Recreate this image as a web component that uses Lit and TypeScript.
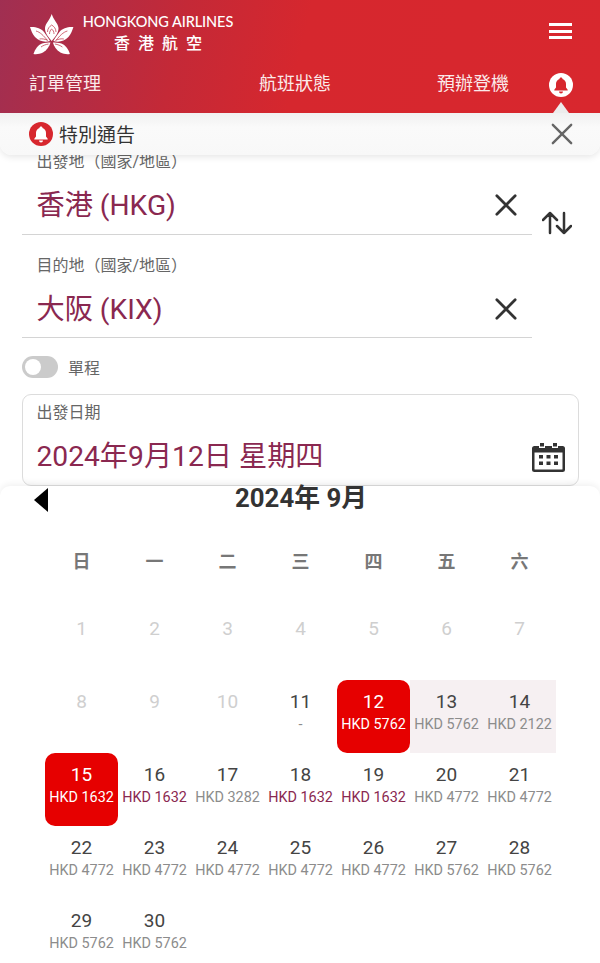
import { LitElement, html, css, svg } from 'lit';
import { customElement } from 'lit/decorators.js';
import { classMap } from 'lit/directives/class-map.js';

type Day = { d: number; price?: string; off?: boolean; sel?: boolean; range?: boolean; low?: boolean };

const WEEK = ['日', '一', '二', '三', '四', '五', '六'];

const DAYS: Day[] = [
  ...[1, 2, 3, 4, 5, 6, 7, 8, 9, 10].map((d) => ({ d, off: true })),
  { d: 11, price: '-' },
  { d: 12, price: 'HKD 5762', sel: true },
  { d: 13, price: 'HKD 5762', range: true },
  { d: 14, price: 'HKD 2122', range: true },
  { d: 15, price: 'HKD 1632', sel: true },
  { d: 16, price: 'HKD 1632', low: true },
  { d: 17, price: 'HKD 3282' },
  { d: 18, price: 'HKD 1632', low: true },
  { d: 19, price: 'HKD 1632', low: true },
  { d: 20, price: 'HKD 4772' },
  { d: 21, price: 'HKD 4772' },
  ...[22, 23, 24, 25, 26].map((d) => ({ d, price: 'HKD 4772' })),
  ...[27, 28, 29, 30].map((d) => ({ d, price: 'HKD 5762' })),
];

// left half of the bauhinia, mirrored for the right side
const sidePetals = svg`
  <path fill="#fff" d="M0 13C5 12.500 11 14 14 18C16 21 18.500 24 20 27C15 28.500 9 27.500 5 23C2.500 20 1 16.500 0 13Z"/>
  <path fill="#fff" d="M3.500 40C5 35 8 31 12 29.500C15 28.500 18 28.500 20.500 28.500C19.500 32 17 36 13 38.500C10 40 6.500 40.500 3.500 40Z"/>
  <path fill="none" stroke="#bb2a3e" stroke-width=".7" d="M6 17C10 18 14 22 17 26M9.500 25C12 24.500 15 25 18 26.500M11 33C13 31.500 15.500 30.500 18.500 30"/>`;

const bell = svg`<path d="M12 4.500c-.9 0-1.500.6-1.500 1.400C8.300 6.600 7 8.500 7 11v3.500L5.300 16.800v.7h13.400v-.7L17 14.500V11c0-2.500-1.300-4.400-3.500-5.100 0-.8-.6-1.400-1.500-1.400zM10 18.500a2 2 0 0 0 4 0z"/>`;

@customElement('app-root')
export class AppRoot extends LitElement {
  static styles = css`
    :host {
      display: block;
      width: 600px;
      height: 963px;
      overflow: hidden;
      background: #fff;
      font-family: Roboto, 'Noto Sans CJK TC', sans-serif;
      color: #333;
    }
    .top {
      height: 113px;
      box-sizing: border-box;
      background: linear-gradient(103deg, #a02f52 0%, #c42937 30%, #d6272e 50%, #d8272e 100%);
      color: #fff;
      position: relative;
      z-index: 3;
    }
    .brand {
      display: flex;
      height: 70px;
      padding: 14px 28px 0 30px;
      box-sizing: border-box;
    }
    .flower {
      width: 44px;
      height: 41px;
    }
    .logo-text {
      margin-left: 8px;
      width: 152px;
      text-align: center;
    }
    .logo-en {
      font-family: Lato, sans-serif;
      font-size: 14.500px;
      font-weight: 500;
      line-height: 16px;
      white-space: nowrap;
      letter-spacing: -0.100px;
    }
    .logo-zh {
      font-size: 16px;
      font-weight: 500;
      line-height: 22px;
      letter-spacing: 8px;
      margin-top: 3px;
      padding-left: 8px;
    }
    .burger {
      margin-left: auto;
      margin-top: 9px;
      width: 23px;
      height: 16px;
      border-top: 3px solid #fff;
      border-bottom: 3px solid #fff;
      box-sizing: border-box;
      position: relative;
    }
    .burger::after {
      content: '';
      position: absolute;
      left: 0;
      right: 0;
      top: 3.500px;
      height: 3px;
      background: #fff;
    }
    .nav {
      display: flex;
      align-items: center;
      padding-left: 29px;
      font-size: 18px;
      line-height: 28px;
      color: #fbeaea;
    }
    .nav span {
      white-space: nowrap;
      width: 72px;
    }
    .nav .flights {
      margin-left: 158px;
    }
    .nav .checkin {
      margin-left: 106px;
    }
    .alert {
      margin-left: 40px;
      margin-top: 2px;
      width: 24px;
      height: 24px;
      border-radius: 50%;
      background: #fff;
      position: relative;
    }
    .alert svg {
      display: block;
      fill: #d7272e;
    }
    .alert::after {
      content: '';
      position: absolute;
      left: 4px;
      top: 29px;
      border-left: 8px solid transparent;
      border-right: 8px solid transparent;
      border-bottom: 11px solid #ececec;
    }
    .notice {
      height: 42px;
      display: flex;
      align-items: center;
      padding: 0 27px 0 29px;
      background: linear-gradient(#f1f1f1, #fafafa 35%, #f8f8f8);
      border-radius: 0 0 12px 12px;
      box-shadow: 0 2px 7px rgba(0, 0, 0, 0.1);
      position: relative;
      z-index: 2;
      font-size: 19px;
      color: #333;
    }
    .notice .dot {
      width: 24px;
      height: 24px;
      border-radius: 50%;
      background: #d7272e;
      fill: #fff;
      margin-right: 6px;
    }
    .notice .dot svg {
      display: block;
    }
    .notice .text {
      margin-top: -2px;
    }
    .notice .close {
      margin-left: auto;
      display: block;
      stroke: #666;
    }
    .form {
      padding: 0 21px 0 22px;
      margin-top: -5px;
    }
    .route {
      position: relative;
      width: 510px;
      height: 85px;
      border-bottom: 1px solid #d4d4d4;
      margin-bottom: 19px;
      padding-left: 14.500px;
      box-sizing: border-box;
    }
    .route + .route {
      height: 84px;
      margin-bottom: 0;
    }
    .label {
      font-size: 16px;
      line-height: 24px;
      color: #666;
    }
    .value {
      font-size: 28.200px;
      line-height: 40px;
      color: #8a2850;
      white-space: nowrap;
    }
    .route .value {
      margin-top: 12px;
    }
    .clear {
      position: absolute;
      right: 15px;
      bottom: 18px;
      stroke: #333;
    }
    .route + .route .clear {
      bottom: 17px;
    }
    .swap {
      position: absolute;
      left: 520px;
      top: 61px;
      stroke: #333;
    }
    .route-wrap {
      position: relative;
    }
    .oneway {
      display: flex;
      align-items: center;
      margin-top: 18px;
      height: 22px;
      font-size: 16px;
      color: #666;
    }
    .track {
      width: 36px;
      height: 22px;
      border-radius: 11px;
      background: #cbcbcb;
      margin-right: 10px;
      position: relative;
    }
    .track::after {
      content: '';
      position: absolute;
      left: 3px;
      top: 3px;
      width: 16px;
      height: 16px;
      border-radius: 50%;
      background: #fff;
    }
    .date-box {
      margin-top: 16px;
      height: 92px;
      box-sizing: border-box;
      border: 1.500px solid #dcdcdc;
      border-radius: 9px;
      padding: 6px 13px 0 13.500px;
      box-shadow: inset 0 -12px 10px -12px rgba(0, 0, 0, 0.05);
    }
    .date-row {
      display: flex;
      align-items: center;
      justify-content: space-between;
      margin-top: 12px;
    }
    .cal-icon {
      display: block;
      fill: #333;
    }
    .panel {
      background: #fff;
      border-radius: 10px 10px 0 0;
      box-shadow: 0 -2px 6px rgba(0, 0, 0, 0.06);
      position: relative;
      height: 477px;
    }
    .cal-head {
      height: 48px;
      display: flex;
      align-items: flex-start;
      justify-content: center;
      padding-left: 2px;
      box-sizing: border-box;
      font-size: 25.800px;
      font-weight: 700;
      line-height: 24px;
      color: #333;
    }
    .prev {
      position: absolute;
      left: 34px;
      top: 2px;
      width: 0;
      height: 0;
      border-top: 12px solid transparent;
      border-bottom: 12px solid transparent;
      border-right: 14px solid #000;
    }
    .grid {
      display: grid;
      grid-template-columns: repeat(7, 73px);
      grid-auto-rows: 73px;
      padding-left: 45px;
    }
    .wd {
      text-align: center;
      font-size: 18px;
      font-weight: 700;
      line-height: 56px;
      color: #777;
    }
    .cell {
      text-align: center;
      padding-top: 11px;
      box-sizing: border-box;
      white-space: nowrap;
    }
    .cell .num {
      font-size: 19px;
      line-height: 22px;
      color: #444;
    }
    .cell .price {
      font-size: 14.400px;
      line-height: 22px;
      color: #8c8c8c;
      margin-top: 1px;
    }
    .cell.off .num {
      color: #cfcfcf;
    }
    .cell.low .price {
      color: #8a2850;
    }
    .cell.range {
      background: #f6f0f2;
    }
    .cell.sel {
      background: #e60000;
      border-radius: 10px;
    }
    .cell.sel .num,
    .cell.sel .price {
      color: #fff;
    }
  `;

  private x(size: number, width: number, cls: string) {
    return html`<svg class=${cls} width=${size} height=${size} viewBox="0 0 24 24" fill="none" stroke-width=${width} stroke-linecap="round">
      <path d="M2 2L22 22M22 2L2 22" />
    </svg>`;
  }

  private route(label: string, value: string) {
    return html`<div class="route">
      <div class="label">${label}</div>
      <div class="value">${value}</div>
      ${this.x(22, 3, 'clear')}
    </div>`;
  }

  render() {
    return html`
      <div class="top">
        <div class="brand">
          <svg class="flower" viewBox="0 0 44 41">
            ${sidePetals}
            <g transform="translate(43.400 0) scale(-1 1)">${sidePetals}</g>
            <path fill="#fff" d="M21.700 0C20 6 15.500 9 15 14C14.700 19 18.500 23 21.700 27C25 23 28.700 19 28.500 14C28 9 23.500 6 21.700 0Z" />
            <path fill="none" stroke="#bb2a3e" stroke-width=".7" d="M17.500 18C17.500 14.500 19.500 12.500 21.700 11C24 12.500 26 14.500 26 18M19.500 20C19.500 17.500 20.500 16 21.700 15C23 16 24 17.500 24 20" />
          </svg>
          <div class="logo-text">
            <div class="logo-en">HONGKONG AIRLINES</div>
            <div class="logo-zh">香港航空</div>
          </div>
          <div class="burger"></div>
        </div>
        <div class="nav">
          <span>訂單管理</span>
          <span class="flights">航班狀態</span>
          <span class="checkin">預辦登機</span>
          <div class="alert"><svg width="24" height="24" viewBox="0 0 24 24">${bell}</svg></div>
        </div>
      </div>
      <div class="notice">
        <div class="dot"><svg width="24" height="24" viewBox="0 0 24 24">${bell}</svg></div>
        <span class="text">特別通告</span>
        ${this.x(22, 2.600, 'close')}
      </div>
      <div class="form">
        <div class="route-wrap">
          ${this.route('出發地（國家/地區）', '香港 (HKG)')}
          ${this.route('目的地（國家/地區）', '大阪 (KIX)')}
          <svg class="swap" width="30" height="24" viewBox="0 0 30 24" fill="none" stroke-width="2.500" stroke-linecap="round" stroke-linejoin="round">
            <path d="M8 22V2M1 9L8 2L15 9M22 2V22M15 15L22 22L29 15" />
          </svg>
        </div>
        <div class="oneway"><div class="track"></div>單程</div>
        <div class="date-box">
          <div class="label">出發日期</div>
          <div class="date-row">
            <div class="value">2024年9月12日 星期四</div>
            <svg class="cal-icon" width="33" height="29" viewBox="0 0 33 29">
              <path fill-rule="evenodd" d="M8 0h4v3.500H8zM21 0h4v3.500h-4zM2.500 3H7v2h6V3h7v2h6V3h4.500A2.500 2.500 0 0 1 33 5.500V26.500A2.500 2.500 0 0 1 30.500 29H2.500A2.500 2.500 0 0 1 0 26.500V5.500A2.500 2.500 0 0 1 2.500 3zM2.500 9.500V26a.5.5 0 0 0 .5.5H30a.5.5 0 0 0 .5-.5V9.500z" />
              <path d="M7 12h4v3.500H7zM14.500 12h4v3.500h-4zM22 12h4v3.500h-4zM7 18.500h4V22H7zM14.500 18.500h4V22h-4zM22 18.500h4V22h-4z" />
            </svg>
          </div>
        </div>
      </div>
      <div class="panel">
        <div class="prev"></div>
        <div class="cal-head">2024年 9月</div>
        <div class="grid">
          ${WEEK.map((w) => html`<div class="wd">${w}</div>`)}
          ${DAYS.map(
            (c) => html`<div class=${classMap({ cell: true, off: !!c.off, sel: !!c.sel, range: !!c.range, low: !!c.low })}>
              <div class="num">${c.d}</div>
              ${c.price ? html`<div class="price">${c.price}</div>` : ''}
            </div>`,
          )}
        </div>
      </div>
    `;
  }
}
